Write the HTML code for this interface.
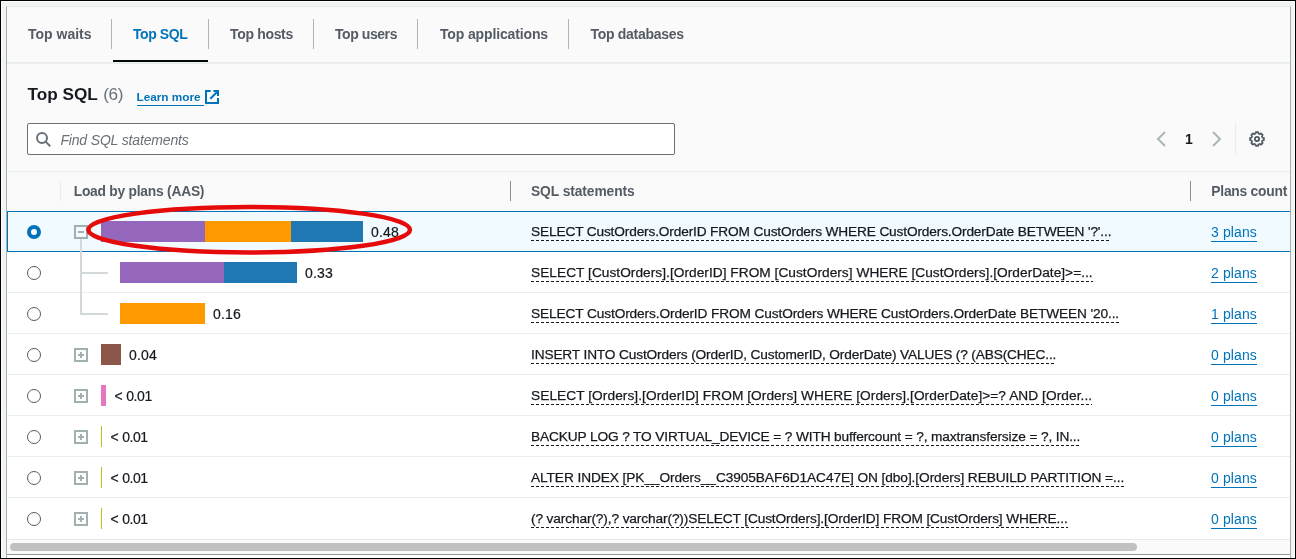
<!DOCTYPE html>
<html lang="en">
<head>
<meta charset="utf-8">
<title>Top SQL</title>
<style>
*{box-sizing:border-box;margin:0;padding:0}
html,body{width:1296px;height:559px;overflow:hidden;background:#fff}
body{font-family:"Liberation Sans",sans-serif;font-size:14px;color:#16191f;position:relative}
#frame{will-change:transform;position:absolute;left:0;top:0;width:1296px;height:559px;background:#f2f3f3;border:1px solid #000;overflow:hidden}
#frame:before{content:"";position:absolute;left:0;top:0;right:0;bottom:0;border:1px solid #fdfdfd;pointer-events:none}
#panel{position:absolute;left:5px;top:5px;width:1285px;height:552px;background:#fafafa;border:1px solid #a4b0b3;border-top-color:#e6e9e9;border-bottom:0;overflow:hidden}
/* tabs */
#tabs{position:absolute;left:0;top:0;width:100%;height:57px;border-bottom:2px solid #eaeded}
#tabs a{position:absolute;top:18px;line-height:18px;font-weight:bold;font-size:14px;color:#545b64;white-space:nowrap}
#tabs a.active{color:#0073bb}
#tabs i{position:absolute;top:12px;width:1px;height:30px;background:#aab7b8}
#tabs b{position:absolute;left:106px;top:53px;width:95px;height:2px;background:#050608}
/* header */
#hdr{position:absolute;left:0;top:0;width:400px;height:0;white-space:nowrap}
#hdr h2{position:absolute;left:20.5px;top:73px;font-size:17.2px;font-weight:bold;line-height:28px;color:#16191f}
#hdr h2 em{position:absolute;left:75.7px;top:0;font-style:normal;font-weight:normal;color:#687078;font-size:17.2px;letter-spacing:-.4px}
#hdr a{position:absolute;left:129.5px;top:82.4px;font-size:11.75px;font-weight:bold;color:#0073bb;text-decoration:none;line-height:16px}
#hdr u{position:absolute;left:129.5px;top:98px;width:67.5px;height:1px;background:#0073bb}
#hdr svg{position:absolute;left:198px;top:83px}
/* search */
#search{position:absolute;left:20px;top:116px;width:648px;height:32px;border:1px solid #687078;border-radius:2px;background:#fff}
#search svg{position:absolute;left:8px;top:8px}
#search span{position:absolute;left:32.4px;top:6.6px;font-style:italic;color:#687078;font-size:14px;letter-spacing:-.16px;line-height:18px;white-space:nowrap}
/* pagination */
#pager{position:absolute;left:0;top:116px;width:100%;height:32px}
#pager svg{position:absolute}
#pager b{position:absolute;left:1178px;top:7px;font-size:14px;line-height:18px;color:#16191f}
#pager i{position:absolute;left:1228px;top:0;width:1px;height:32px;background:#eaeded}
/* table */
#tbl{position:absolute;left:0;top:164px;width:100%;height:368px;background:#fff}
#thead{position:absolute;left:0;top:0;width:100%;height:40px;background:#fafafa;border-top:1px solid #eaeded;font-weight:bold;color:#545b64;font-size:13.8px}
#thead div{position:absolute;top:11px;line-height:18px;white-space:nowrap}
#thead i{position:absolute;top:9px;width:1px;height:20px;background:#879596}
#thead i.l{background:#eaeded}
.row{position:absolute;left:0;width:100%;height:41px;border-bottom:1px solid #eaeded;background:#fff}
.row.sel{background:#f1faff}
.row.last{border-bottom:0}
.row.sel:after{content:"";position:absolute;left:0;top:0;right:-3px;bottom:-1px;border:1px solid #0073bb}
.rad{position:absolute;left:20px;top:14px;width:14px;height:14px;border-radius:50%;border:1px solid #545b64;background:#fff}
.sel .rad{border:4px solid #0073bb}
.exp{position:absolute;left:67px;top:14px;width:14px;height:14px;border:2px solid #a3b0b1;background:#fff}
.exp:before{content:"";position:absolute;left:2px;top:4px;width:6px;height:2px;background:#a3b0b1}
.exp.plus:after{content:"";position:absolute;left:4px;top:2px;width:2px;height:6px;background:#a3b0b1}
.sel .exp{background:#f1faff}
.bars{position:absolute;top:10px;height:21px;display:flex}
.bars i{display:block;height:21px}
.val{-webkit-text-stroke:.2px #16191f;position:absolute;top:12px;font-size:14px;line-height:18px;white-space:nowrap;letter-spacing:.2px}
.sql{-webkit-text-stroke:.25px #16191f;position:absolute;left:524px;top:12px;font-size:13.7px;letter-spacing:-.16px;line-height:18px;white-space:nowrap;height:18px;background:repeating-linear-gradient(90deg,#16191f 0,#16191f 3px,transparent 3px,transparent 5px) left bottom/100% 1px no-repeat}
.pl{position:absolute;left:1204px;top:12px;font-size:14px;letter-spacing:.12px;line-height:18px;white-space:nowrap;color:#0073bb;border-bottom:1px solid #0073bb;height:19px;text-decoration:none}
.c1{background:#9467bd}.c2{background:#ff9900}.c3{background:#1f77b4}.c4{background:#8c564b}.c5{background:#e377c2}.c6{background:#bcbd22}
#tree{position:absolute;left:0;top:0}
#ring{position:absolute;left:0;top:0;pointer-events:none}
/* scrollbar */
#sb{position:absolute;left:0;top:532px;width:100%;height:15px;background:#fafafa;border-top:1px solid #e8e8e8}
#sb i{position:absolute;left:3px;top:3px;width:1127px;height:8px;border-radius:4px;background:#c1c1c1}
#foot{position:absolute;left:0;top:547px;width:100%;height:4px;background:#fff;border-top:1px solid #8c999c}
</style>
</head>
<body>
<div id="frame">
<div id="panel">
<div id="tabs">
<a style="left:21px">Top waits</a>
<i style="left:104px"></i>
<a class="active" style="left:126px;letter-spacing:-.43px">Top SQL</a>
<i style="left:201px"></i>
<a style="left:223px;letter-spacing:-.33px">Top hosts</a>
<i style="left:306px"></i>
<a style="left:328px;letter-spacing:-.43px">Top users</a>
<i style="left:410px"></i>
<a style="left:433px;letter-spacing:-.14px">Top applications</a>
<i style="left:561px"></i>
<a style="left:583.5px;letter-spacing:-.29px">Top databases</a>
<b></b>
</div>
<div id="hdr"><h2>Top SQL <em>(6)</em></h2><a>Learn more</a><u></u>
<svg width="14" height="14" viewBox="0 0 14 14" fill="none" stroke="#0073bb" stroke-width="2"><path d="M5.700 1H1v12h12V8"/><path d="M8.400 1H13v4.900M13 1L5.300 8.700"/></svg>
</div>
<div id="search"><svg width="16" height="16" viewBox="0 0 16 16" fill="none" stroke="#687078" stroke-width="2"><circle cx="6" cy="6" r="5"/><path d="M9.600 9.600L14.200 14.200"/></svg><span>Find SQL statements</span></div>
<div id="pager">
<svg style="left:1149px;top:8px" width="12" height="16" viewBox="0 0 12 16" fill="none" stroke="#aab7b8" stroke-width="2"><path d="M9 1L2 8l7 7"/></svg>
<b>1</b>
<svg style="left:1203px;top:8px" width="12" height="16" viewBox="0 0 12 16" fill="none" stroke="#aab7b8" stroke-width="2"><path d="M3 1l7 7-7 7"/></svg>
<i></i>
<svg style="left:1241.800px;top:7.900px" width="16" height="16" viewBox="0 0 16 16" fill="none" stroke="#545b64" stroke-width="1.700" stroke-linejoin="round"><circle cx="8" cy="8" r="2.100" stroke-width="1.900"/><path d="M6.62 2.47L6.84 1.10L9.16 1.10L9.38 2.47L10.94 3.11L12.06 2.30L13.70 3.94L12.89 5.06L13.53 6.62L14.90 6.84L14.90 9.16L13.53 9.38L12.89 10.94L13.70 12.06L12.06 13.70L10.94 12.89L9.38 13.53L9.16 14.90L6.84 14.90L6.62 13.53L5.06 12.89L3.94 13.70L2.30 12.06L3.11 10.94L2.47 9.38L1.10 9.16L1.10 6.84L2.47 6.62L3.11 5.06L2.30 3.94L3.94 2.30L5.06 3.11Z"/></svg>
</div>
<div id="tbl">
<div id="thead"><i class="l" style="left:53px"></i><div style="left:66.700px;letter-spacing:-.23px">Load by plans (AAS)</div><i style="left:503px"></i><div style="left:524px;letter-spacing:-.08px">SQL statements</div><i style="left:1183px"></i><div style="left:1204.300px;letter-spacing:-.22px">Plans count</div></div>
<div class="row sel" style="top:40px"><span class="rad"></span><span class="exp minus"></span><div class="bars" style="left:94px"><i class="c1" style="width:104px"></i><i class="c2" style="width:86px"></i><i class="c3" style="width:72px"></i></div><span class="val" style="left:364px">0.48</span><span class="sql" style="letter-spacing:-0.152px">SELECT CustOrders.OrderID FROM CustOrders WHERE CustOrders.OrderDate BETWEEN '?'...</span><a class="pl">3 plans</a></div>
<div class="row" style="top:81px"><span class="rad"></span><div class="bars" style="left:113px"><i class="c1" style="width:104px"></i><i class="c3" style="width:73px"></i></div><span class="val" style="left:298px">0.33</span><span class="sql" style="letter-spacing:0.035px">SELECT [CustOrders].[OrderID] FROM [CustOrders] WHERE [CustOrders].[OrderDate]&gt;=...</span><a class="pl">2 plans</a></div>
<div class="row" style="top:122px"><span class="rad"></span><div class="bars" style="left:113px"><i class="c2" style="width:85px"></i></div><span class="val" style="left:206px">0.16</span><span class="sql" style="letter-spacing:-0.119px">SELECT CustOrders.OrderID FROM CustOrders WHERE CustOrders.OrderDate BETWEEN '20...</span><a class="pl">1 plans</a></div>
<div class="row" style="top:163px"><span class="rad"></span><span class="exp plus"></span><div class="bars" style="left:94px"><i class="c4" style="width:20px"></i></div><span class="val" style="left:122px">0.04</span><span class="sql" style="letter-spacing:-0.147px">INSERT INTO CustOrders (OrderID, CustomerID, OrderDate) VALUES (? (ABS(CHEC...</span><a class="pl">0 plans</a></div>
<div class="row" style="top:204px"><span class="rad"></span><span class="exp plus"></span><div class="bars" style="left:94px"><i class="c5" style="width:5px"></i></div><span class="val" style="left:107.5px;letter-spacing:-.45px;word-spacing:.6px">&lt; 0.01</span><span class="sql" style="letter-spacing:0.065px">SELECT [Orders].[OrderID] FROM [Orders] WHERE [Orders].[OrderDate]&gt;=? AND [Order...</span><a class="pl">0 plans</a></div>
<div class="row" style="top:245px"><span class="rad"></span><span class="exp plus"></span><div class="bars" style="left:94px"><i class="c6" style="width:1px"></i></div><span class="val" style="left:103.4px;letter-spacing:-.45px;word-spacing:.6px">&lt; 0.01</span><span class="sql" style="letter-spacing:-0.127px">BACKUP LOG ? TO VIRTUAL_DEVICE = ? WITH buffercount = ?, maxtransfersize = ?, IN...</span><a class="pl">0 plans</a></div>
<div class="row" style="top:286px"><span class="rad"></span><span class="exp plus"></span><div class="bars" style="left:94px"><i class="c6" style="width:1px"></i></div><span class="val" style="left:103.4px;letter-spacing:-.45px;word-spacing:.6px">&lt; 0.01</span><span class="sql" style="letter-spacing:-0.08px">ALTER INDEX [PK__Orders__C3905BAF6D1AC47E] ON [dbo].[Orders] REBUILD PARTITION =...</span><a class="pl">0 plans</a></div>
<div class="row last" style="top:327px"><span class="rad"></span><span class="exp plus"></span><div class="bars" style="left:94px"><i class="c6" style="width:1px"></i></div><span class="val" style="left:103.4px;letter-spacing:-.45px;word-spacing:.6px">&lt; 0.01</span><span class="sql" style="letter-spacing:-0.12px">(? varchar(?),? varchar(?))SELECT [CustOrders].[OrderID] FROM [CustOrders] WHERE...</span><a class="pl">0 plans</a></div><svg id="tree" width="120" height="368" fill="none" stroke="#d3d9da" stroke-width="2"><path d="M74 68V143H101M74 102H101"/></svg>
<svg id="ring" width="450" height="120" fill="none"><ellipse cx="242.150" cy="58.700" rx="160.800" ry="22.750" stroke="#e60b0b" stroke-width="4.500"/></svg>
</div>
<div id="sb"><i></i></div>
<div id="foot"></div>
</div>
</div>
</body>
</html>
